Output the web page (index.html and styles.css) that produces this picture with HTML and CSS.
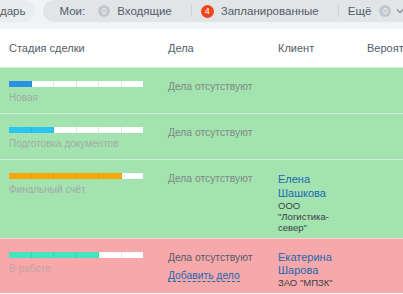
FILE: index.html
```html
<!DOCTYPE html>
<html lang="ru">

<head>
    <meta charset="UTF-8">
    <meta name="viewport" content="width=device-width, initial-scale=1.0">
    <title>Сделки</title>
    <link rel="stylesheet" href="styles.css">
</head>

<body>
    <div class="topbar">
        <div class="tab-prev">дарь</div>
        <div class="counters">
            <span class="counters-title">Мои:</span>
            <span class="counter">
                <span class="badge">0</span>
                <span>Входящие</span>
            </span>
            <span class="sep"></span>
            <span class="counter">
                <span class="badge badge-red">4</span>
                <span>Запланированные</span>
            </span>
            <span class="sep"></span>
            <span class="counter counter-more">
                <span>Ещё</span>
                <span class="badge">0</span>
                <svg class="chevron" width="8" height="6" viewBox="0 0 8 6">
                    <path d="M1 1.5 L4 4.5 L7 1.5" fill="none" stroke="#8a929a" stroke-width="1.3" />
                </svg>
            </span>
        </div>
    </div>

    <div class="grid">
        <div class="grid-head">
            <div class="cell">Стадия сделки</div>
            <div class="cell">Дела</div>
            <div class="cell">Клиент</div>
            <div class="cell cell-clip">Вероятность</div>
        </div>

        <!-- Новая -->
        <div class="grid-row row-green">
            <div class="cell cell-stage">
                <div class="stage-bar">
                    <span class="seg on" style="background:#2d8fe2"></span>
                    <span class="seg"></span><span class="seg"></span><span class="seg"></span><span class="seg"></span><span class="seg"></span>
                </div>
                <div class="stage-name">Новая</div>
            </div>
            <div class="cell"><div class="no-tasks">Дела отсутствуют</div></div>
            <div class="cell"></div>
            <div class="cell"></div>
        </div>

        <!-- Подготовка документов -->
        <div class="grid-row row-green">
            <div class="cell cell-stage">
                <div class="stage-bar">
                    <span class="seg on" style="background:#2fc3f4"></span>
                    <span class="seg on" style="background:#2fc3f4"></span>
                    <span class="seg"></span><span class="seg"></span><span class="seg"></span><span class="seg"></span>
                </div>
                <div class="stage-name">Подготовка документов</div>
            </div>
            <div class="cell"><div class="no-tasks">Дела отсутствуют</div></div>
            <div class="cell"></div>
            <div class="cell"></div>
        </div>

        <!-- Финальный счёт -->
        <div class="grid-row row-green">
            <div class="cell cell-stage">
                <div class="stage-bar">
                    <span class="seg on" style="background:#ffa900"></span>
                    <span class="seg on" style="background:#ffa900"></span>
                    <span class="seg on" style="background:#ffa900"></span>
                    <span class="seg on" style="background:#ffa900"></span>
                    <span class="seg on" style="background:#ffa900"></span>
                    <span class="seg"></span>
                </div>
                <div class="stage-name">Финальный счёт</div>
            </div>
            <div class="cell"><div class="no-tasks">Дела отсутствуют</div></div>
            <div class="cell client">
                <a class="client-name" href="#">Елена Шашкова</a>
                <div class="client-company">ООО "Логистика-север"</div>
            </div>
            <div class="cell"></div>
        </div>

        <!-- В работе -->
        <div class="grid-row row-red">
            <div class="cell cell-stage">
                <div class="stage-bar">
                    <span class="seg on" style="background:#47e4c2"></span>
                    <span class="seg on" style="background:#47e4c2"></span>
                    <span class="seg on" style="background:#47e4c2"></span>
                    <span class="seg on" style="background:#47e4c2"></span>
                    <span class="seg"></span><span class="seg"></span>
                </div>
                <div class="stage-name">В работе</div>
            </div>
            <div class="cell">
                <div class="no-tasks">Дела отсутствуют</div>
                <a class="add-task" href="#">Добавить дело</a>
            </div>
            <div class="cell client">
                <a class="client-name" href="#">Екатерина Шарова</a>
                <div class="client-company">ЗАО "МПЗК"</div>
            </div>
            <div class="cell"></div>
        </div>
    </div>
</body>

</html>
```

FILE: styles.css
```css
body {
    margin: 0;
    font-family: "Liberation Sans", Arial, sans-serif;
    color: #535c69;
    background: #fff;
    overflow: hidden;
}

/* верхняя панель счётчиков */
.topbar {
    display: flex;
    align-items: flex-start;
    gap: 8px;
    height: 29px;
    background: #f1f4f6;
    font-size: 11.5px;
    color: #535c69;
}

.tab-prev {
    height: 22px;
    line-height: 22px;
    padding-right: 9px;
    background: #e9edf0;
    border-radius: 0 11px 11px 0;
}

.counters {
    flex: 1;
    display: flex;
    align-items: center;
    height: 22px;
    padding-left: 17px;
    background: #e1e5e8;
    border-radius: 11px 0 0 11px;
    white-space: nowrap;
}

.counters-title {
    margin-right: 13px;
}

.counter {
    display: flex;
    align-items: center;
    gap: 7px;
}

.counter-more {
    gap: 8px;
}

.badge {
    display: inline-flex;
    align-items: center;
    justify-content: center;
    width: 12px;
    height: 12px;
    border-radius: 50%;
    background: #c3c8cc;
    color: #f4f5f6;
    font-size: 8.5px;
}

.badge-red {
    width: 13px;
    height: 13px;
    background: #f0461c;
    color: #fff;
    font-size: 9px;
}

.sep {
    width: 1px;
    height: 12px;
    background: #cdd2d6;
    margin: 0 9px 0 19px;
}

.chevron {
    margin-left: -3px;
}

/* таблица сделок */
.grid-head,
.grid-row {
    display: grid;
    grid-template-columns: 159px 110px 89px 1fr;
}

.cell {
    padding: 12px 13px 0 9px;
    min-width: 0;
}

.cell-clip {
    overflow: hidden;
}

.grid-head {
    height: 38px;
    font-size: 11px;
    color: #535c69;
    white-space: nowrap;
}

.grid-head .cell {
    padding-top: 0;
    line-height: 38px;
}

.grid-row {
    border-top: 1px solid rgba(255, 255, 255, 0.45);
    padding-bottom: 5px;
}

.cell-stage {
    padding-bottom: 4px;
}

.row-green {
    background: #a2e3b0;
}

.row-red {
    background: #f7a8aa;
}

.stage-bar {
    display: flex;
    width: 134px;
    height: 6px;
    margin-top: 1px;
    background: #fff;
}

.seg {
    flex: 1;
    border-right: 1px solid #e2e6e8;
    background: #fff;
}

.seg:last-child {
    border-right: none;
}

.seg.on {
    border-right-color: rgba(0, 0, 0, 0.08);
}

.stage-name {
    margin-top: 4px;
    font-size: 10px;
    line-height: 13px;
    color: #a4aba7;
    white-space: nowrap;
}

.row-red .stage-name {
    color: #c6a2a4;
}

.no-tasks {
    font-size: 10.3px;
    line-height: 14px;
    color: #7f8a84;
    white-space: nowrap;
}

.row-red .no-tasks {
    color: #535c69;
}

.add-task {
    font-size: 10.3px;
    line-height: 12px;
    color: #2067b0;
    text-decoration: none;
    border-bottom: 1px dashed #2067b0;
}

.client-name {
    display: block;
    font-size: 11px;
    line-height: 14px;
    color: #2067b0;
    text-decoration: none;
}

.client-company {
    font-size: 9.5px;
    line-height: 11px;
    color: #3a3f45;
}

.row-red .client-name {
    line-height: 13px;
}
```
